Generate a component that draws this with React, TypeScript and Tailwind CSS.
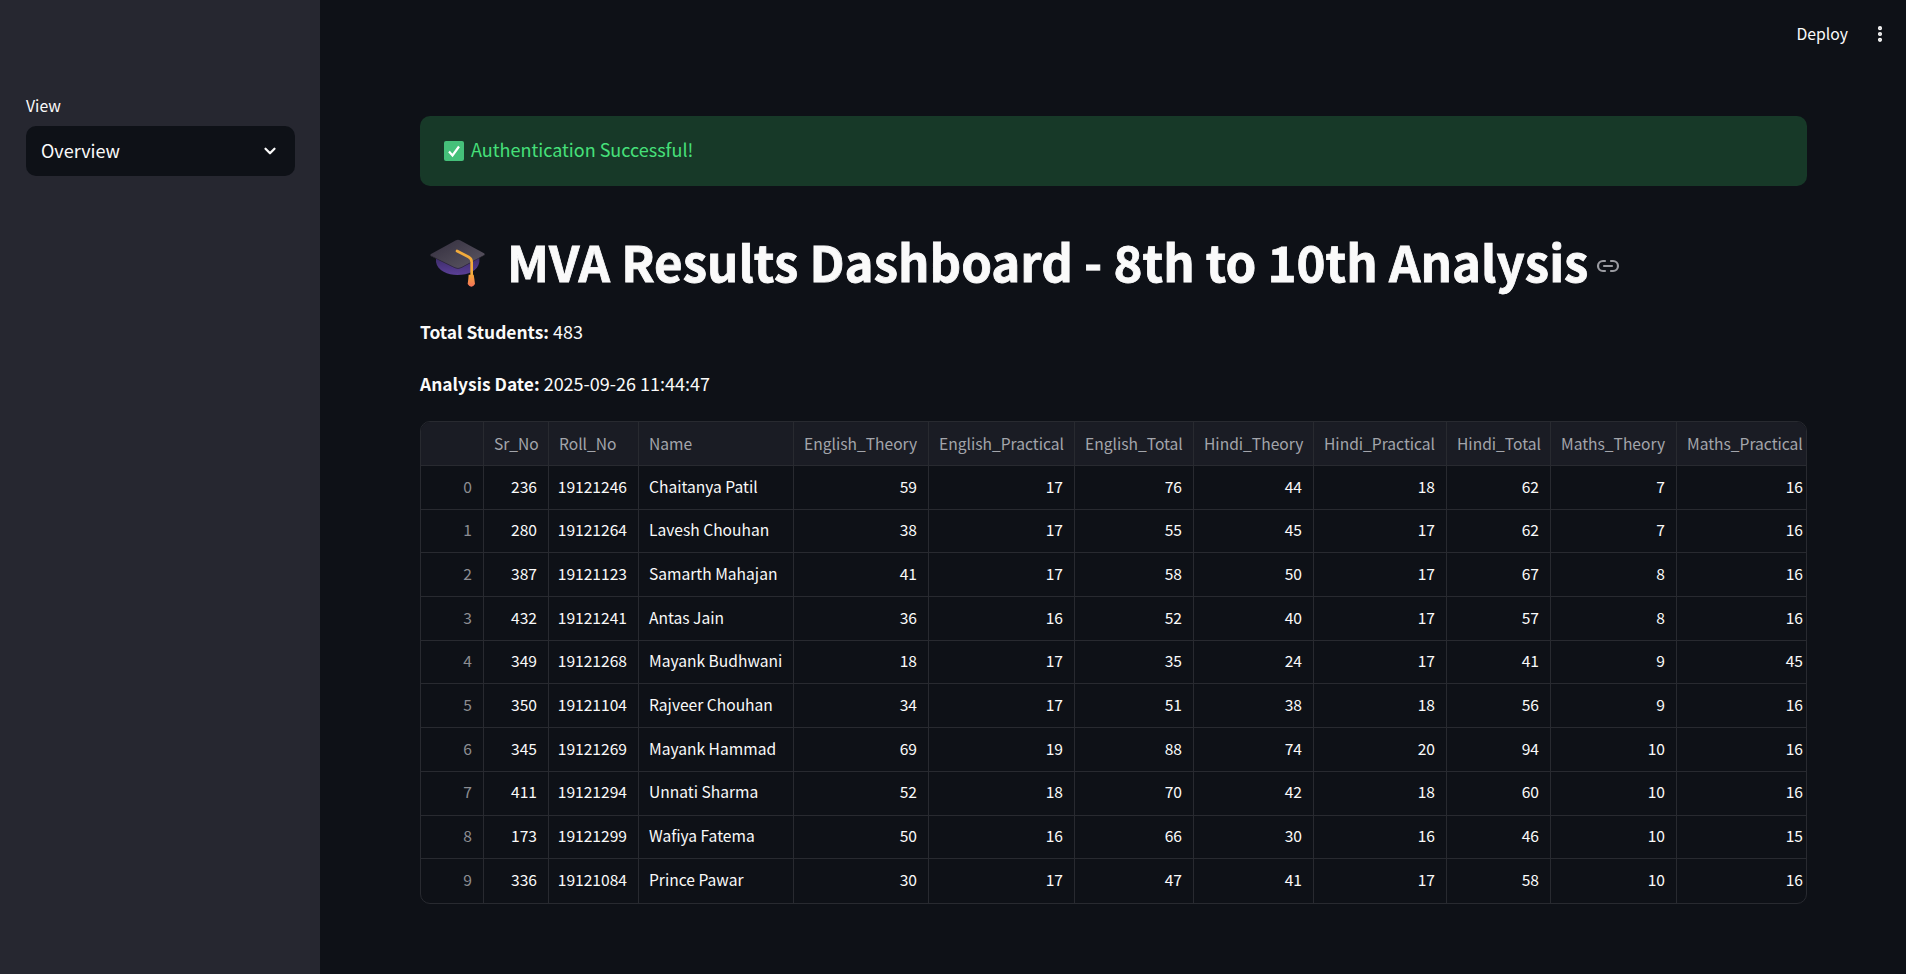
import { ChevronDown, EllipsisVertical, Link2 } from 'lucide-react'

const columns = [
  { label: 'Sr_No', width: 'w-[65px]' },
  { label: 'Roll_No', width: 'w-[90px]' },
  { label: 'Name', width: 'w-[155px]' },
  { label: 'English_Theory', width: 'w-[135px]' },
  { label: 'English_Practical', width: 'w-[146px]' },
  { label: 'English_Total', width: 'w-[119px]' },
  { label: 'Hindi_Theory', width: 'w-[120px]' },
  { label: 'Hindi_Practical', width: 'w-[133px]' },
  { label: 'Hindi_Total', width: 'w-[104px]' },
  { label: 'Maths_Theory', width: 'w-[126px]' },
  { label: 'Maths_Practical', width: 'w-[130px]' },
]

const rows = [
  ['236', '19121246', 'Chaitanya Patil', '59', '17', '76', '44', '18', '62', '7', '16'],
  ['280', '19121264', 'Lavesh Chouhan', '38', '17', '55', '45', '17', '62', '7', '16'],
  ['387', '19121123', 'Samarth Mahajan', '41', '17', '58', '50', '17', '67', '8', '16'],
  ['432', '19121241', 'Antas Jain', '36', '16', '52', '40', '17', '57', '8', '16'],
  ['349', '19121268', 'Mayank Budhwani', '18', '17', '35', '24', '17', '41', '9', '45'],
  ['350', '19121104', 'Rajveer Chouhan', '34', '17', '51', '38', '18', '56', '9', '16'],
  ['345', '19121269', 'Mayank Hammad', '69', '19', '88', '74', '20', '94', '10', '16'],
  ['411', '19121294', 'Unnati Sharma', '52', '18', '70', '42', '18', '60', '10', '16'],
  ['173', '19121299', 'Wafiya Fatema', '50', '16', '66', '30', '16', '46', '10', '15'],
  ['336', '19121084', 'Prince Pawar', '30', '17', '47', '41', '17', '58', '10', '16'],
]

function GraduationCap() {
  // drawn in the coordinates of a 3x crop, hence the viewBox
  return (
    <svg width="60" height="52" viewBox="24 60 180 156" className="shrink-0">
      <defs>
        <linearGradient id="board" x1="0" y1="0" x2="1" y2="1">
          <stop offset="0" stopColor="#332e3e" />
          <stop offset="1" stopColor="#5c5763" />
        </linearGradient>
        <linearGradient id="skirt" x1="0" y1="0" x2="0" y2="1">
          <stop offset="0" stopColor="#3c2c68" />
          <stop offset="1" stopColor="#5a3f96" />
        </linearGradient>
        <linearGradient id="tassel" x1="0" y1="0" x2="0" y2="1">
          <stop offset="0" stopColor="#f4a93a" />
          <stop offset="1" stopColor="#f4705a" />
        </linearGradient>
      </defs>
      <path d="M48 118 V132 C52 158 84 171 112 171 C145 171 174 158 178 132 V118 Z" fill="url(#skirt)" />
      <path d="M108 67 Q114 64 120 67 L192 106 Q196 109 192 112 L124 148 Q114 152 104 148 L33 114 Q29 111 33 108 Z" fill="url(#board)" />
      <path d="M31 112 L104 148 Q114 152 124 148 L194 110 L194 112 L124 150 Q114 154 104 150 L31 114 Z" fill="#2a2631" />
      <path d="M111 99 L146 117 Q155 122 155 132 V170" stroke="#f2ab3c" strokeWidth="8" fill="none" strokeLinecap="round" />
      <path d="M146 170 h15 l2 12 l2 16 q-11 17 -22 0 l2 -16 z" fill="url(#tassel)" />
    </svg>
  )
}

function CheckBox() {
  return (
    <span className="flex h-5 w-5 shrink-0 items-center justify-center rounded-[2px] bg-[#45c07a]">
      <svg width="14" height="14" viewBox="0 0 14 14">
        <path d="M2 7.5 L5.5 11.5 L12 2.5" stroke="#ffffff" strokeWidth="2.2" fill="none" />
      </svg>
    </span>
  )
}

export default function App() {
  return (
    <div className="flex h-[974px] w-[1906px] overflow-hidden bg-[#0e1117] font-['Noto_Sans_CJK_SC','Noto_Sans',sans-serif] text-[#fafafa]">
      {/* sidebar */}
      <aside className="flex w-[320px] shrink-0 flex-col bg-[#262730] pl-[26px] pr-[25px] pt-[94px]">
        <label className="text-[15.75px] leading-[24px]">View</label>
        <div className="mt-[8px] flex h-[50px] items-center justify-between rounded-[10px] bg-[#0e1117] pl-[15px] pr-[16px]">
          <span className="pb-[2px] text-[18px] leading-[28px]">Overview</span>
          <ChevronDown size={18} strokeWidth={3} />
        </div>
      </aside>

      <main className="flex min-w-0 flex-1 flex-col">
        {/* toolbar */}
        <div className="flex h-[68px] shrink-0 items-center justify-end">
          <span className="text-[15.75px] leading-[24px]">Deploy</span>
          <EllipsisVertical size={20} strokeWidth={3} className="ml-[22px] mr-[16px]" />
        </div>

        <div className="flex flex-col pl-[100px] pr-[99px] pt-[48px]">
          {/* alert */}
          <div className="flex h-[70px] items-center gap-[7px] rounded-[10px] bg-[#173928] pl-[24px] text-[18px] leading-[28px] text-[#46e07a]">
            <CheckBox />
            <span className="pb-[4px]">Authentication Successful!</span>
          </div>

          {/* title */}
          <div className="mt-[42px] flex h-[66px] items-center">
            <div className="ml-[8px] mr-[19px] mt-[6px] flex items-center">
              <GraduationCap />
            </div>
            <h1 className="text-[49.2px] leading-[66px] font-bold whitespace-nowrap text-[#fafafa] [-webkit-text-stroke:0.8px_#fafafa]">
              MVA Results Dashboard - 8th to 10th Analysis
            </h1>
            <Link2 size={24} strokeWidth={2.2} className="mt-[10px] ml-[8px] text-[#9a9ba1]" />
          </div>

          <p className="mt-[23px] text-[18px] leading-[28px]">
            <strong className="text-[17.4px] font-bold">Total Students:</strong> 483
          </p>
          <p className="mt-[23px] text-[18px] leading-[28px]">
            <strong className="text-[17.4px] font-bold">Analysis Date:</strong> 2025-09-26 11:44:47
          </p>

          {/* dataframe */}
          <div className="mt-[23px] overflow-hidden rounded-[10px] border border-[#282a30] text-[15.6px]">
            <div className="flex h-[44px] border-b border-[#282a30] bg-[#1a1c24] text-[#a3a5ab]">
              <div className="w-[63px] shrink-0 border-r border-[#282a30]" />
              {columns.map((col) => (
                <div key={col.label} className={`${col.width} flex shrink-0 items-center border-r border-[#282a30] pl-[10px] whitespace-nowrap last:border-r-0`}>
                  {col.label}
                </div>
              ))}
            </div>
            {rows.map((row, i) => (
              <div key={row[0]} className="flex h-[43.7px] border-b border-[#282a30] last:border-b-0">
                <div className="flex w-[63px] shrink-0 items-center justify-end border-r border-[#282a30] pr-[11px] pb-[2px] text-[#8c8d92]">
                  {i}
                </div>
                {row.map((cell, j) => (
                  <div
                    key={j}
                    className={`${columns[j].width} flex shrink-0 items-center border-r border-[#282a30] pb-[2px] whitespace-nowrap last:border-r-0 last:pr-[4px] ${j === 2 ? 'justify-start pl-[10px]' : 'justify-end pr-[11px]'}`}
                  >
                    {cell}
                  </div>
                ))}
              </div>
            ))}
          </div>
        </div>
      </main>
    </div>
  )
}
